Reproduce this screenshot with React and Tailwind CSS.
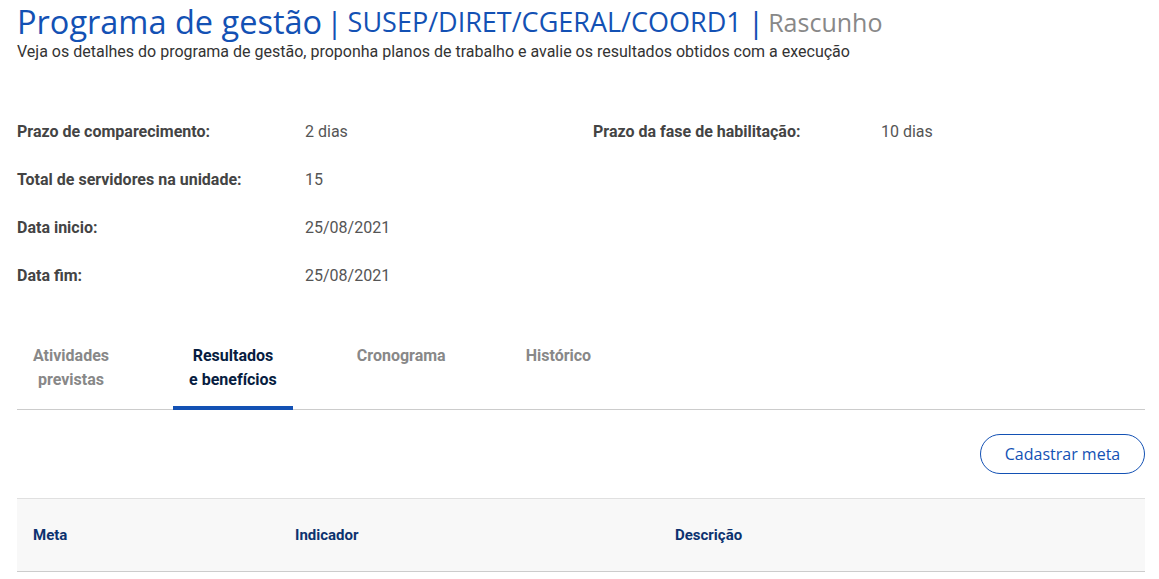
export default function App() {
  const rows = [
    ["Prazo de comparecimento:", "2 dias", "Prazo da fase de habilitação:", "10 dias"],
    ["Total de servidores na unidade:", "15", "", ""],
    ["Data inicio:", "25/08/2021", "", ""],
    ["Data fim:", "25/08/2021", "", ""],
  ];
  const tabs = [
    ["Atividades", "previstas", false],
    ["Resultados", "e benefícios", true],
    ["Cronograma", "", false],
    ["Histórico", "", false],
  ];
  return (
    <div className="bg-white w-[1159px] h-[579px] overflow-hidden pl-[17px] pr-[14px] font-['Roboto',sans-serif] text-[#333]">
      <h1 className="h-[44px] flex items-center whitespace-nowrap font-['Open_Sans',sans-serif] text-[#1351b4] font-normal">
        <span className="text-[32.5px] leading-[44px]">Programa de gestão</span>
        <span className="text-[30px] leading-[44px] ml-[4px] mr-[5px]">|</span>
        <span className="text-[27px] leading-[44px]">SUSEP/DIRET/CGERAL/COORD1</span>
        <span className="text-[30px] leading-[44px] ml-[6px] mr-[4px]">|</span>
        <span className="text-[25px] leading-[44px] text-[#888]">Rascunho</span>
      </h1>
      <p className="text-[16px] leading-[20px] mt-[-2px] text-[#333]">
        Veja os detalhes do programa de gestão, proponha planos de trabalho e avalie os resultados obtidos com a execução
      </p>
      <div className="mt-[46px] grid grid-cols-[288px_288px_288px_1fr] text-[16px] text-[#555]">
        {rows.map((r, i) => (
          <div key={i} className="contents">
            <div className="h-[48px] flex items-center font-bold text-[#444]">{r[0]}</div>
            <div className="h-[48px] flex items-center">{r[1]}</div>
            <div className="h-[48px] flex items-center font-bold text-[#444]">{r[2]}</div>
            <div className="h-[48px] flex items-center">{r[3]}</div>
          </div>
        ))}
      </div>
      <div className="mt-[40px] flex gap-[48px] border-b border-[#ccc]">
        {tabs.map(([a, b, active]) => (
          <div
            key={a}
            className={
              "px-[16px] pt-[4px] pb-[14px] text-center text-[16px] leading-[24px] font-bold border-b-[4px] mb-[-1px] " +
              (active ? "border-[#1351b4] text-[#071d41]" : "border-transparent text-[#888]")
            }
          >
            <div>{a}</div>
            {b && <div>{b}</div>}
          </div>
        ))}
      </div>
      <div className="mt-[24px] flex justify-end">
        <button className="h-[40px] w-[165px] rounded-full border border-[#1351b4] text-[#1351b4] text-[16px] font-['Open_Sans',sans-serif]">
          Cadastrar meta
        </button>
      </div>
      <div className="mt-[24px] h-[74px] bg-[#f8f8f8] border-t border-[#e0e0e0] border-b border-b-[#ccc] grid grid-cols-[262px_380px_1fr] items-center px-[16px] text-[15px] font-bold text-[#0c326f]">
        <div>Meta</div>
        <div>Indicador</div>
        <div>Descrição</div>
      </div>
    </div>
  );
}
